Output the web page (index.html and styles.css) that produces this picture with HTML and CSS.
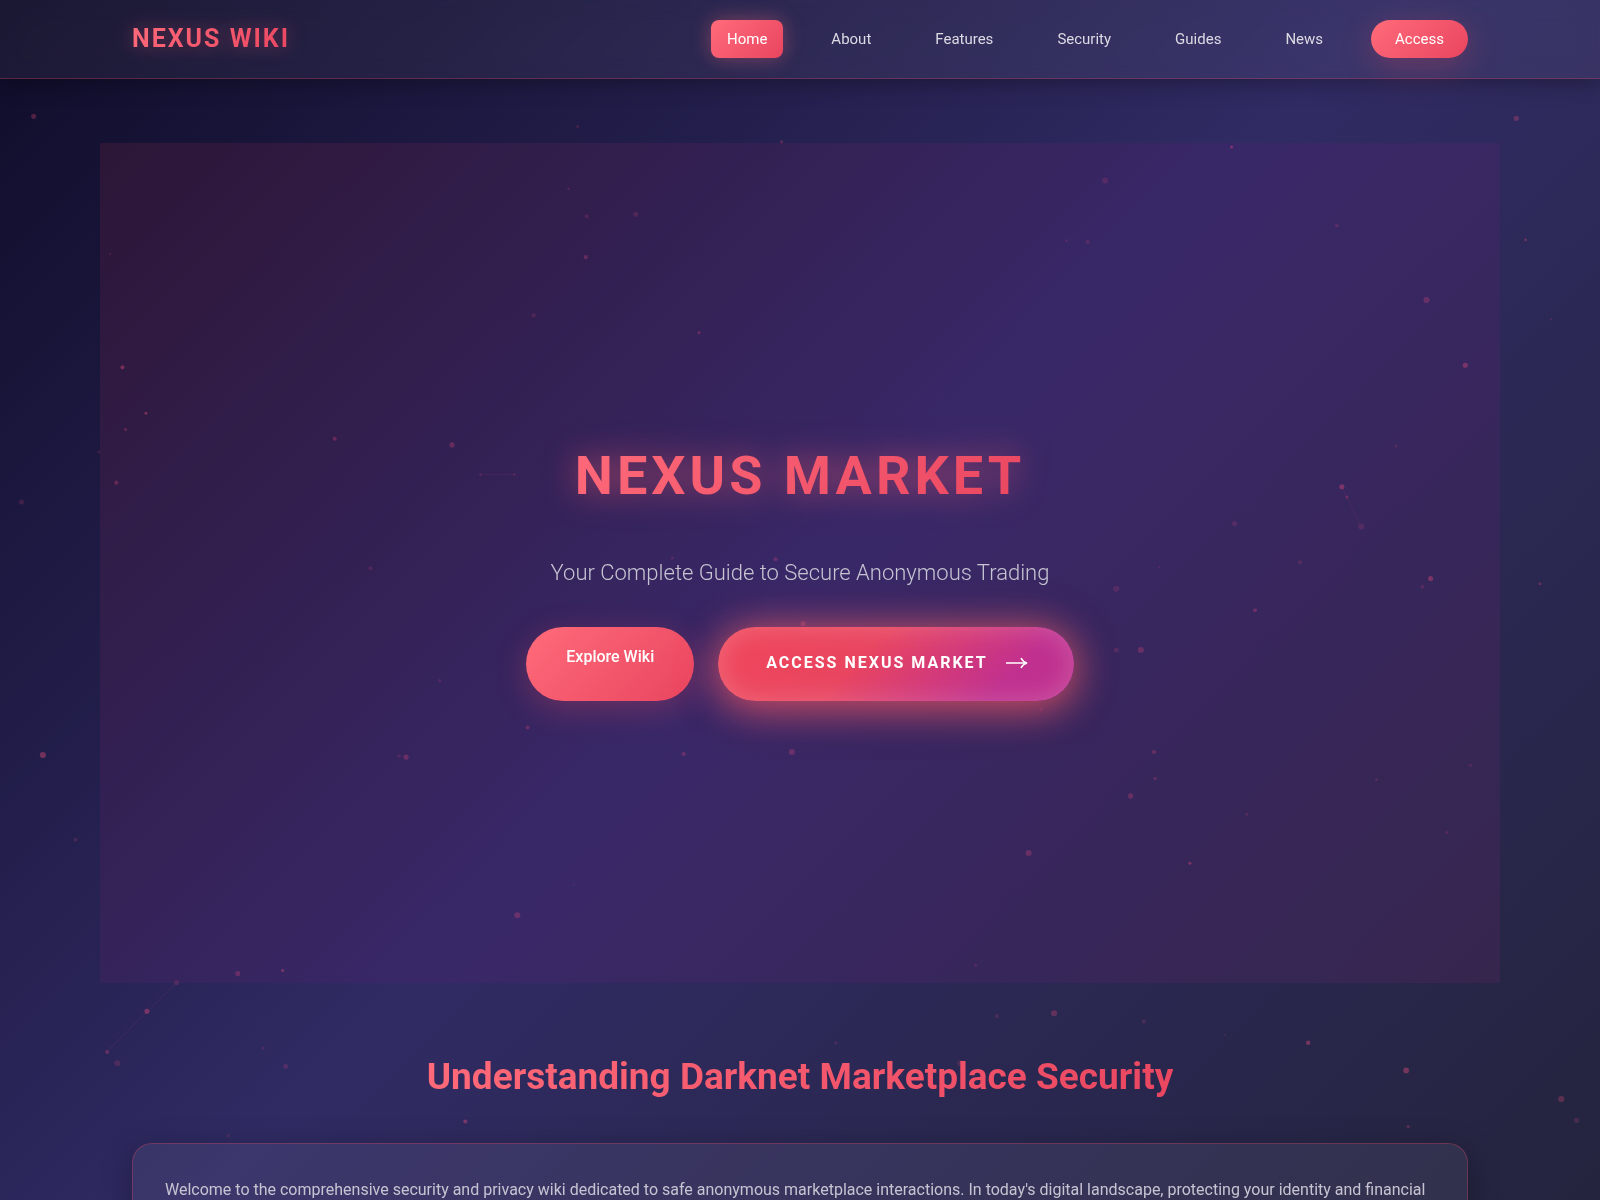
FILE: index.html
```html
<!DOCTYPE html>
<html lang="en">
<head>
<meta charset="utf-8">
<meta name="viewport" content="width=device-width, initial-scale=1">
<title>Nexus Wiki</title>
<link rel="stylesheet" href="styles.css">
</head>
<body>
<svg class="particles" viewBox="0 0 1568 1176" preserveAspectRatio="xMidYMid slice" aria-hidden="true">
  <g class="particles-faint">
    <circle cx="566" cy="124" r="1.5"/><circle cx="575" cy="212" r="2"/><circle cx="623" cy="210" r="2.5"/><circle cx="1045" cy="236" r="1.5"/><circle cx="1066" cy="237" r="2"/><circle cx="1310" cy="221" r="2"/><circle cx="1083" cy="177" r="3"/><circle cx="108" cy="249" r="1"/><circle cx="21" cy="492" r="2.5"/><circle cx="97" cy="443" r="1.5"/><circle cx="471" cy="465" r="1.5"/><circle cx="504" cy="465" r="1.5"/><circle cx="363" cy="557" r="2"/><circle cx="431" cy="667" r="1.5"/><circle cx="1210" cy="513" r="2.5"/><circle cx="1334" cy="516" r="3"/><circle cx="1274" cy="551" r="2"/><circle cx="1136" cy="556" r="1"/><circle cx="1094" cy="577" r="3"/><circle cx="1094" cy="637" r="2.5"/><circle cx="1394" cy="575" r="2"/><circle cx="1368" cy="437" r="1.5"/><circle cx="1520" cy="313" r="1"/><circle cx="1441" cy="750" r="1.5"/><circle cx="1349" cy="764" r="1.5"/><circle cx="1418" cy="816" r="1.5"/><circle cx="1222" cy="798" r="1.5"/><circle cx="956" cy="946" r="1.5"/><circle cx="562" cy="867" r="1"/><circle cx="74" cy="823" r="2"/><circle cx="173" cy="963" r="2.5"/><circle cx="115" cy="1042" r="3"/><circle cx="258" cy="1027" r="1.5"/><circle cx="280" cy="1045" r="2.5"/><circle cx="977" cy="996" r="2"/><circle cx="1121" cy="1001" r="2"/><circle cx="1200" cy="1014" r="1"/><circle cx="819" cy="1022" r="1.5"/><circle cx="941" cy="1042" r="3"/><circle cx="1545" cy="1098" r="2.5"/><circle cx="224" cy="1113" r="1.5"/><circle cx="391" cy="741" r="1.5"/><circle cx="659" cy="547" r="1.5"/><circle cx="1020" cy="695" r="1.5"/><circle cx="523" cy="309" r="2"/>
    <path d="M471 465H504M391 741H398M1315 477L1334 516M105 1030L173 963"/>
  </g>
  <g class="particles-mid">
    <circle cx="33" cy="114" r="2.5"/><circle cx="1486" cy="116" r="2.5"/><circle cx="766" cy="139" r="1.5"/><circle cx="557" cy="185" r="1"/><circle cx="574" cy="252" r="2"/><circle cx="685" cy="326" r="1.5"/><circle cx="1398" cy="294" r="3"/><circle cx="1495" cy="235" r="1.5"/><circle cx="123" cy="421" r="1.5"/><circle cx="114" cy="473" r="2"/><circle cx="328" cy="430" r="2"/><circle cx="443" cy="436" r="2.5"/><circle cx="760" cy="548" r="2"/><circle cx="787" cy="611" r="2.5"/><circle cx="517" cy="713" r="2"/><circle cx="398" cy="742" r="2.5"/><circle cx="670" cy="739" r="2"/><circle cx="776" cy="737" r="3"/><circle cx="1131" cy="737" r="2"/><circle cx="1132" cy="763" r="1.5"/><circle cx="1108" cy="780" r="2.5"/><circle cx="1118" cy="637" r="3"/><circle cx="1230" cy="598" r="2"/><circle cx="1320" cy="487" r="1.5"/><circle cx="1509" cy="572" r="1.5"/><circle cx="1008" cy="836" r="3"/><circle cx="507" cy="897" r="3"/><circle cx="233" cy="954" r="2.5"/><circle cx="105" cy="1031" r="2"/><circle cx="1033" cy="993" r="3"/><circle cx="1530" cy="1077" r="3"/><circle cx="1380" cy="1104" r="1.5"/>
  </g>
  <g class="particles-strong">
    <circle cx="1207" cy="144" r="1.5"/><circle cx="120" cy="360" r="2"/><circle cx="143" cy="405" r="1.5"/><circle cx="1436" cy="358" r="2.5"/><circle cx="1315" cy="477" r="2.5"/><circle cx="1402" cy="567" r="2.5"/><circle cx="42" cy="740" r="3"/><circle cx="144" cy="991" r="2.5"/><circle cx="277" cy="951" r="1.5"/><circle cx="1166" cy="846" r="1.5"/><circle cx="1282" cy="1022" r="2.2"/><circle cx="1378" cy="1049" r="2.8"/><circle cx="456" cy="1099" r="2"/>
  </g>
</svg>

<header class="site-header">
  <div class="header-inner">
    <a class="logo" href="#">NEXUS WIKI</a>
    <nav class="nav" aria-label="Main">
      <a class="nav-link nav-link-active" href="#">Home</a>
      <a class="nav-link" href="#">About</a>
      <a class="nav-link" href="#">Features</a>
      <a class="nav-link" href="#">Security</a>
      <a class="nav-link" href="#">Guides</a>
      <a class="nav-link" href="#">News</a>
      <a class="nav-link nav-link-access" href="#">Access</a>
    </nav>
  </div>
</header>

<main>
  <section class="hero">
    <h1 class="hero-title">NEXUS MARKET</h1>
    <p class="hero-subtitle">Your Complete Guide to Secure Anonymous Trading</p>
    <div class="hero-actions">
      <a class="button-explore" href="#">Explore Wiki</a>
      <a class="button-market" href="#">ACCESS NEXUS MARKET
        <svg class="arrow" viewBox="0 0 22 12" aria-hidden="true"><path d="M0 6H20M15 1Q17 5 21 6Q17 7 15 11"/></svg>
      </a>
    </div>
  </section>

  <section class="intro">
    <h2 class="intro-title">Understanding Darknet Marketplace Security</h2>
    <div class="card">
      <p>Welcome to the comprehensive security and privacy wiki dedicated to safe anonymous marketplace interactions. In today's digital landscape, protecting your identity and financial</p>
    </div>
  </section>
</main>
</body>
</html>
```
FILE: styles.css
```css
* { box-sizing: border-box; margin: 0; padding: 0; }

:root {
  --accent: linear-gradient(135deg, #ff6b7a, #e94560);
}

body {
  min-height: 100vh;
  font: 400 16px/28px Roboto, sans-serif;
  color: #c6c4d2;
  background: linear-gradient(135deg, #0f0c29, #302b63, #24243e) fixed;
}

a { color: inherit; text-decoration: none; }

.particles {
  position: fixed;
  inset: 0;
  width: 100%;
  height: 100%;
  pointer-events: none;
}
.particles circle { fill: #e04c78; }
.particles path { stroke: #e04c78; stroke-opacity: .5; fill: none; }
.particles-faint { opacity: .18; }
.particles-mid { opacity: .3; }
.particles-strong { opacity: .42; }

.site-header {
  position: sticky;
  top: 0;
  z-index: 10;
  background: rgba(255, 255, 255, .05);
  border-bottom: 1px solid rgba(233, 69, 96, .3);
  box-shadow: 0 4px 20px rgba(0, 0, 0, .3);
  backdrop-filter: blur(10px);
}
.header-inner {
  display: flex;
  align-items: center;
  justify-content: space-between;
  max-width: 1400px;
  margin: 0 auto;
  padding: 20px 32px;
}
.logo {
  font-weight: 700;
  font-size: 25px;
  line-height: 36px;
  letter-spacing: 2px;
  color: transparent;
  background: var(--accent);
  background-clip: text;
  filter: drop-shadow(0 0 10px rgba(255, 90, 110, .4));
}
.nav { display: flex; gap: 32px; }
.nav-link {
  padding: 0 16px;
  font-size: 15px;
  line-height: 38px;
  color: #dcdae4;
  border-radius: 8px;
}
.nav-link-active {
  color: #fff;
  background: var(--accent);
  box-shadow: 0 0 20px rgba(255, 107, 122, .4);
}
.nav-link-access {
  padding: 0 24px;
  color: #fff;
  background: var(--accent);
  border-radius: 24px;
  box-shadow: 0 8px 32px rgba(233, 69, 96, .3);
}

main { position: relative; max-width: 1400px; margin: 64px auto 0; }

.hero {
  display: flex;
  flex-direction: column;
  align-items: center;
  justify-content: center;
  min-height: 70vh;
  background: linear-gradient(135deg, rgba(255, 70, 90, .1), rgba(140, 20, 150, .1) 50%, rgba(192, 40, 150, .1));
}
.hero-title {
  margin-bottom: 26px;
  font-weight: 700;
  font-size: 54px;
  line-height: 102px;
  letter-spacing: 4px;
  color: transparent;
  background: var(--accent);
  background-clip: text;
  filter: drop-shadow(0 0 16px rgba(255, 90, 110, .6));
}
.hero-subtitle {
  margin-bottom: 34px;
  font-weight: 300;
  font-size: 22px;
  line-height: 40px;
}
.hero-actions { display: flex; gap: 24px; }
.button-explore {
  padding: 16px 40px;
  font-weight: 500;
  color: #fff;
  background: var(--accent);
  border-radius: 50px;
  box-shadow: 0 8px 32px rgba(233, 69, 96, .3);
}
.button-market {
  display: flex;
  align-items: center;
  gap: 18px;
  padding: 22px 46px 24px 48px;
  font-weight: 700;
  font-size: 16px;
  letter-spacing: 2px;
  color: #fff;
  background: linear-gradient(135deg, #f0465a, #e94560 40%, #c0308f 80%);
  border-radius: 50px;
  box-shadow: 0 10px 40px rgba(255, 80, 96, .5), 0 0 40px rgba(255, 107, 107, .5), inset 0 0 28px rgba(255, 255, 255, .2);
}
.arrow { width: 22px; height: 12px; fill: none; stroke: #fff; stroke-width: 1.6; }

.intro { padding: 62px 32px; }
.intro-title {
  width: fit-content;
  margin: 0 auto 34px;
  font-weight: 700;
  font-size: 37px;
  line-height: 64px;
  color: transparent;
  background: var(--accent);
  background-clip: text;
}
.card {
  padding: 32px;
  background: rgba(255, 255, 255, .06);
  border: 1px solid rgba(233, 69, 96, .3);
  border-radius: 20px;
  box-shadow: 0 8px 32px rgba(0, 0, 0, .3);
}
```
